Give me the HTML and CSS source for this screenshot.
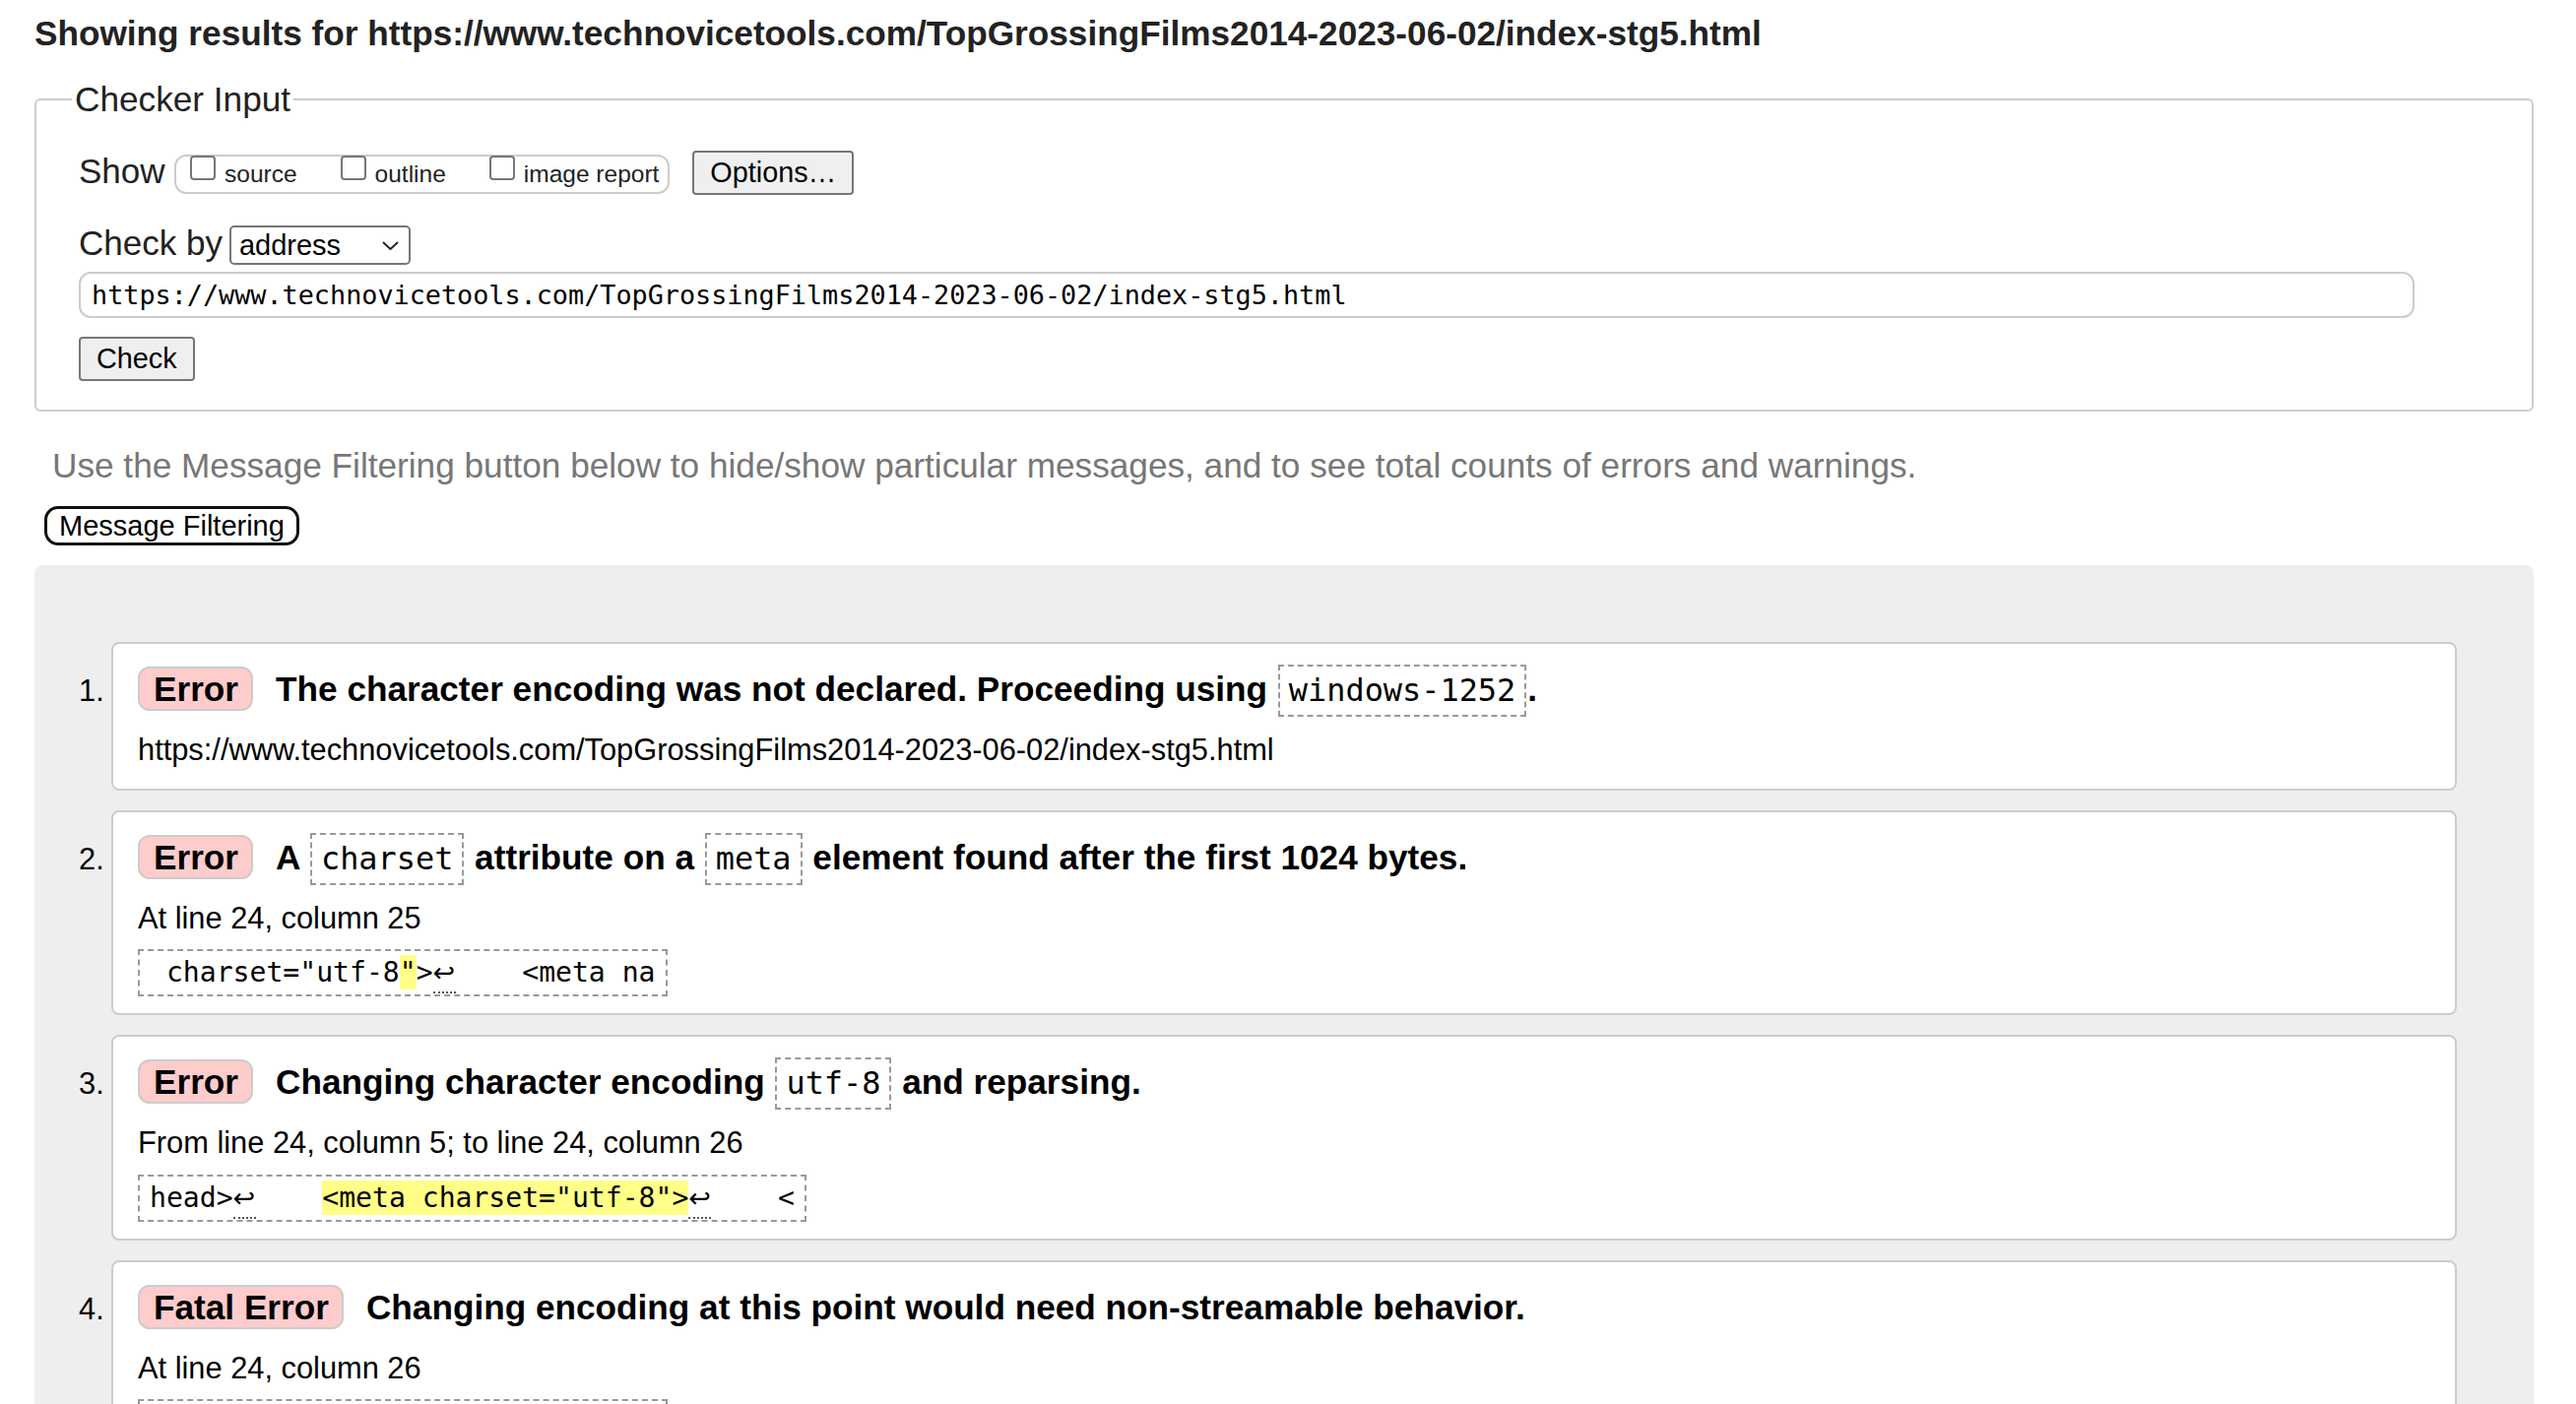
FILE: index.html
```html
<!DOCTYPE html>
<html lang="en">
<head>
<meta charset="utf-8">
<title>Showing results for https://www.technovicetools.com/TopGrossingFilms2014-2023-06-02/index-stg5.html</title>
<link rel="stylesheet" href="styles.css">
</head>
<body>
<div class="page">
  <h1 class="title">Showing results for https://www.technovicetools.com/TopGrossingFilms2014-2023-06-02/index-stg5.html</h1>

  <form class="checker">
    <fieldset class="checker-fieldset">
      <legend class="checker-legend">Checker Input</legend>

      <div class="row row-show">
        <span class="row-label show-label">Show</span>
        <span class="options-group">
          <label class="opt"><input type="checkbox" class="cb"><span class="opt-text">source</span></label>
          <label class="opt"><input type="checkbox" class="cb"><span class="opt-text">outline</span></label>
          <label class="opt"><input type="checkbox" class="cb"><span class="opt-text">image report</span></label>
        </span>
        <button type="button" class="btn btn-options">Options…</button>
      </div>

      <div class="row row-checkby">
        <span class="row-label">Check by</span>
        <span class="select-wrap">
          <select class="select"><option>address</option></select>
          <svg class="chev" width="17" height="9" viewBox="0 0 17 9" aria-hidden="true"><polyline points="1,1 8.5,8 16,1" fill="none" stroke="#222" stroke-width="2"/></svg>
        </span>
      </div>

      <input class="url-input" type="url" value="https://www.technovicetools.com/TopGrossingFilms2014-2023-06-02/index-stg5.html">

      <div class="row row-submit">
        <button type="button" class="btn btn-check">Check</button>
      </div>
    </fieldset>
  </form>

  <p class="hint">Use the Message Filtering button below to hide/show particular messages, and to see total counts of errors and warnings.</p>
  <div class="filter-row"><button type="button" class="filter-btn">Message Filtering</button></div>

  <section class="results">
    <ol class="messages">
      <li class="msg">
        <span class="msg-num">1.</span>
        <div class="card">
          <p class="msg-head"><strong class="badge">Error</strong><span>The character encoding was not declared. Proceeding using <code class="code">windows-1252</code>.</span></p>
          <p class="msg-loc">https://www.technovicetools.com/TopGrossingFilms2014-2023-06-02/index-stg5.html</p>
        </div>
      </li>
      <li class="msg">
        <span class="msg-num">2.</span>
        <div class="card">
          <p class="msg-head"><strong class="badge">Error</strong><span>A <code class="code">charset</code> attribute on a <code class="code">meta</code> element found after the first 1024 bytes.</span></p>
          <p class="msg-loc">At line 24, column 25</p>
          <code class="extract"> charset="utf-8<mark class="hl">"</mark>&gt;<span class="lf" title="Line break">↩</span>    &lt;meta na</code>
        </div>
      </li>
      <li class="msg">
        <span class="msg-num">3.</span>
        <div class="card">
          <p class="msg-head"><strong class="badge">Error</strong><span>Changing character encoding <code class="code">utf-8</code> and reparsing.</span></p>
          <p class="msg-loc">From line 24, column 5; to line 24, column 26</p>
          <code class="extract">head&gt;<span class="lf" title="Line break">↩</span>    <mark class="hl">&lt;meta charset="utf-8"&gt;</mark><span class="lf" title="Line break">↩</span>    &lt;</code>
        </div>
      </li>
      <li class="msg">
        <span class="msg-num">4.</span>
        <div class="card">
          <p class="msg-head"><strong class="badge">Fatal Error</strong><span>Changing encoding at this point would need non-streamable behavior.</span></p>
          <p class="msg-loc">At line 24, column 26</p>
          <code class="extract"> charset="utf-8"<mark class="hl">&gt;</mark><span class="lf" title="Line break">↩</span>    &lt;meta na</code>
        </div>
      </li>
    </ol>
  </section>
</div>
</body>
</html>
```

FILE: styles.css
```css
* {
  box-sizing: border-box;
}

html,
body {
  margin: 0;
  padding: 0;
  background: #fff;
}

body {
  font-family: "Liberation Sans", Arial, sans-serif;
  color: #222;
}

.page {
  padding: 14px 43px 0 35px;
}

/* Title */
.title {
  margin: 0;
  font-size: 35.2px;
  line-height: 40px;
  font-weight: bold;
  color: #222;
}

/* Checker input form */
.checker {
  margin: 27px 0 0;
}

.checker-fieldset {
  margin: 0;
  min-width: 0;
  padding: 32px 0 29px 43px;
  border: 2px solid #ccc;
  border-radius: 6px;
}

.checker-legend {
  margin-left: -7px;
  padding: 0 3px;
  font-size: 35.2px;
  line-height: 40px;
  color: #222;
}

.row {
  display: flex;
  align-items: flex-start;
}

.row-label {
  font-size: 35px;
  line-height: 40px;
  color: #222;
}

.show-label {
  margin-top: 1px;
  margin-right: 9.5px;
}

.options-group {
  display: flex;
  align-items: flex-start;
  height: 40px;
  margin-top: 4px;
  margin-right: 23px;
  padding: 0 9px 0 14px;
  border: 2px solid #ccc;
  border-radius: 12px;
}

.opt {
  display: flex;
  align-items: flex-start;
}

.opt + .opt {
  margin-left: 44px;
}

.cb {
  -webkit-appearance: none;
  appearance: none;
  flex: 0 0 auto;
  width: 26px;
  height: 25px;
  margin: -1px 9px 0 0;
  border: 2px solid #767676;
  border-radius: 4px;
  background: #fff;
}

.opt-text {
  padding-top: 3.5px;
  font-size: 24.5px;
  line-height: 28px;
  color: #222;
}

.btn {
  height: 45px;
  margin: 0;
  padding: 0 16px;
  font-family: "Liberation Sans", Arial, sans-serif;
  font-size: 28.8px;
  color: #000;
  background: #efefef;
  border: 2px solid #767676;
  border-radius: 4px;
}

.row-checkby {
  margin-top: 29px;
}

.select-wrap {
  position: relative;
  display: inline-flex;
  margin-top: 2px;
  margin-left: 7px;
}

.select {
  -webkit-appearance: none;
  appearance: none;
  width: 184px;
  height: 40px;
  margin: 0;
  padding: 0 8px;
  font-family: "Liberation Sans", Arial, sans-serif;
  font-size: 29px;
  color: #000;
  background: #fff;
  border: 2px solid #767676;
  border-radius: 5px;
}

.chev {
  position: absolute;
  left: 155px;
  top: 16px;
  pointer-events: none;
}

.url-input {
  display: block;
  width: 2372px;
  height: 47px;
  margin: 7px 0 0;
  padding: 0 11px;
  font-family: "DejaVu Sans Mono", "Liberation Mono", monospace;
  font-size: 26.8px;
  color: #000;
  background: #fff;
  border: 2px solid #ccc;
  border-radius: 12px;
}

.row-submit {
  margin-top: 19px;
}

/* Hint + filter */
.hint {
  margin: 35px 0 0 18px;
  font-size: 35.2px;
  line-height: 40px;
  color: #777;
}

.filter-row {
  margin: 21px 0 0 10px;
}

.filter-btn {
  height: 40px;
  margin: 0;
  padding: 0 12px;
  font-family: "Liberation Sans", Arial, sans-serif;
  font-size: 29px;
  line-height: 34px;
  color: #000;
  background: #fff;
  border: 3px solid #111;
  border-radius: 14px;
}

/* Results */
.results {
  margin-top: 20px;
  padding: 78px 78px 40px 43px;
  background: #eee;
  border-radius: 8px 8px 0 0;
}

.messages {
  list-style: none;
  margin: 0;
  padding: 0;
}

.msg {
  display: flex;
  align-items: baseline;
  margin-bottom: 20px;
}

.msg-num {
  flex: 0 0 35px;
  padding-left: 2px;
  font-size: 30.8px;
  color: #000;
}

.card {
  flex: 1 1 auto;
  min-width: 0;
  padding: 24px 20px 17px 25px;
  color: #000;
  background: #fff;
  border: 2px solid #ccc;
  border-radius: 8px;
}

.msg-head {
  margin: 0;
  font-size: 35.2px;
  line-height: 44px;
  font-weight: bold;
}

.badge {
  margin-right: 23px;
  padding: 1px 13px 1px 14px;
  font-weight: bold;
  background: #fcc;
  border: 2px solid #ccc;
  border-radius: 12px;
}

.code {
  margin: 0 1px;
  padding: 5px 9px 6px;
  font-family: "DejaVu Sans Mono", "Liberation Mono", monospace;
  font-size: 31.9px;
  line-height: 30px;
  font-weight: normal;
  border: 2px dashed #999;
}

.msg-loc {
  margin: 19px 0 0;
  font-size: 30.8px;
  line-height: 42.84px;
}

.extract {
  display: block;
  width: fit-content;
  margin-top: 9.7px;
  padding: 0 10px;
  font-family: "DejaVu Sans Mono", "Liberation Mono", monospace;
  font-size: 28.1px;
  line-height: 44px;
  white-space: pre;
  color: #000;
  border: 2px dashed #999;
}

.hl {
  padding: 1px 0;
  color: #000;
  background: #ff8;
}

.lf {
  display: inline-block;
  width: 23px;
  font-family: "DejaVu Sans", sans-serif;
  font-size: 27px;
  line-height: 38px;
  border-bottom: 2px dotted #555;
}
```
